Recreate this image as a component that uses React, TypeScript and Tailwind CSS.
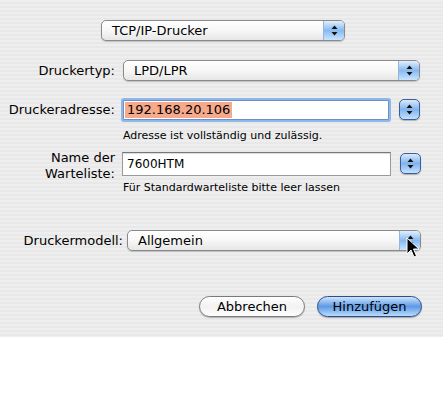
import React from "react";

const font = { fontFamily: '"DejaVu Sans", "Lucida Grande", sans-serif' };

function Arrows() {
  return (
    <svg width="7" height="11" viewBox="0 0 7 11">
      <path d="M3.5 0.5 L6.5 4 L0.5 4 Z" fill="#111" />
      <path d="M0.5 7 L6.5 7 L3.5 10.5 Z" fill="#111" />
    </svg>
  );
}

function Popup({ text, className }: { text: string; className: string }) {
  return (
    <div
      className={`flex h-[21px] items-center rounded-[5px] border border-[#8a8a8a] bg-gradient-to-b from-white via-[#f7f7f7] to-[#e6e6e6] shadow-[0_1px_1px_rgba(0,0,0,0.18)] ${className}`}
    >
      <span className="flex-1 pl-[10px] text-[13px] leading-none text-black">{text}</span>
      <div className="flex h-full w-[21px] items-center justify-center rounded-r-[4px] border-l border-[#9ab4d6] bg-gradient-to-b from-[#e2effd] via-[#86b9f0] to-[#c8e4fe]">
        <Arrows />
      </div>
    </div>
  );
}

function Stepper() {
  return (
    <div className="flex h-[21px] w-[21px] items-center justify-center rounded-[5px] border border-[#3b5f98] bg-gradient-to-b from-[#dbe9fb] via-[#80b3ee] to-[#c3e1fe] shadow-[0_1px_1px_rgba(0,0,0,0.25)]">
      <Arrows />
    </div>
  );
}

export default function App() {
  return (
    <div className="w-[443px] h-[411px] bg-white text-black" style={font}>
      <div className="relative h-[337px] w-full bg-[repeating-linear-gradient(to_bottom,#eeeeee_0px,#eeeeee_2px,#e8e8e8_2px,#e8e8e8_4px)]">
        <div className="flex flex-col pt-[20px]">
          {/* Top popup */}
          <Popup text="TCP/IP-Drucker" className="ml-[101px] w-[244px]" />

          {/* Druckertyp */}
          <div className="mt-[19px] flex items-center">
            <div className="w-[116px] pr-[1px] text-right text-[13px] leading-none">Druckertyp:</div>
            <Popup text="LPD/LPR" className="ml-[7px] w-[297px]" />
          </div>

          {/* Druckeradresse */}
          <div className="mt-[18px] flex items-center">
            <div className="w-[116px] pr-[1px] text-right text-[13px] leading-none">Druckeradresse:</div>
            <div className="ml-[7px] flex h-[20px] w-[266px] items-center rounded-[1px] border border-[#6f8fbf] bg-white shadow-[0_0_0_2px_#8db8ec]">
              <span className="ml-[1px] bg-[#f7aa8b] px-[2px] text-[13px] leading-[16px]">192.168.20.106</span>
            </div>
            <div className="ml-[10px]">
              <Stepper />
            </div>
          </div>
          <div className="ml-[123px] mt-[9px] text-[11px] leading-[13px]">Adresse ist vollständig und zulässig.</div>

          {/* Name der Warteliste */}
          <div className="mt-[8px] flex items-start">
            <div className="w-[116px] pr-[1px] text-right text-[13px] leading-[16px]">
              Name der
              <br />
              Warteliste:
            </div>
            <div className="ml-[6px] mt-[2px] flex h-[24px] w-[269px] items-center border border-[#9a9a9a] border-t-[#777] bg-white shadow-[inset_0_1px_1px_rgba(0,0,0,0.15)]">
              <span className="ml-[4px] text-[12px] leading-none">7600HTM</span>
            </div>
            <div className="ml-[9px] mt-[3px]">
              <Stepper />
            </div>
          </div>
          <div className="ml-[123px] mt-[-1px] text-[11px] leading-[13px]">Für Standardwarteliste bitte leer lassen</div>

          {/* Druckermodell */}
          <div className="mt-[36px] flex items-center">
            <div className="w-[123px] text-right text-[13px] leading-none">Druckermodell:</div>
            <Popup text="Allgemein" className="ml-[4px] w-[294px]" />
          </div>

          {/* Buttons */}
          <div className="mt-[45px] flex">
            <div className="ml-[199px] flex h-[21px] w-[106px] items-center justify-center rounded-full border border-[#7a7a7a] bg-gradient-to-b from-white via-[#f2f2f2] to-[#fdfdfd] text-[13px] leading-none shadow-[0_1px_1px_rgba(0,0,0,0.25)]">
              Abbrechen
            </div>
            <div className="ml-[12px] flex h-[21px] w-[105px] items-center justify-center rounded-full border border-[#2a4f8c] bg-gradient-to-b from-[#cfe3fb] via-[#5d9ae6] to-[#b9dcfd] text-[13px] leading-none shadow-[0_1px_1px_rgba(0,0,0,0.3)]">
              Hinzufügen
            </div>
          </div>
        </div>

        {/* Mouse cursor */}
        <svg className="absolute left-[406px] top-[237px]" width="14" height="22" viewBox="0 0 14 22">
          <path d="M1 1 L1 17 L5 13 L8 20 L10.5 19 L7.5 12 L13 12 Z" fill="#000" stroke="#fff" strokeWidth="1" strokeLinejoin="round" />
        </svg>
      </div>
    </div>
  );
}
